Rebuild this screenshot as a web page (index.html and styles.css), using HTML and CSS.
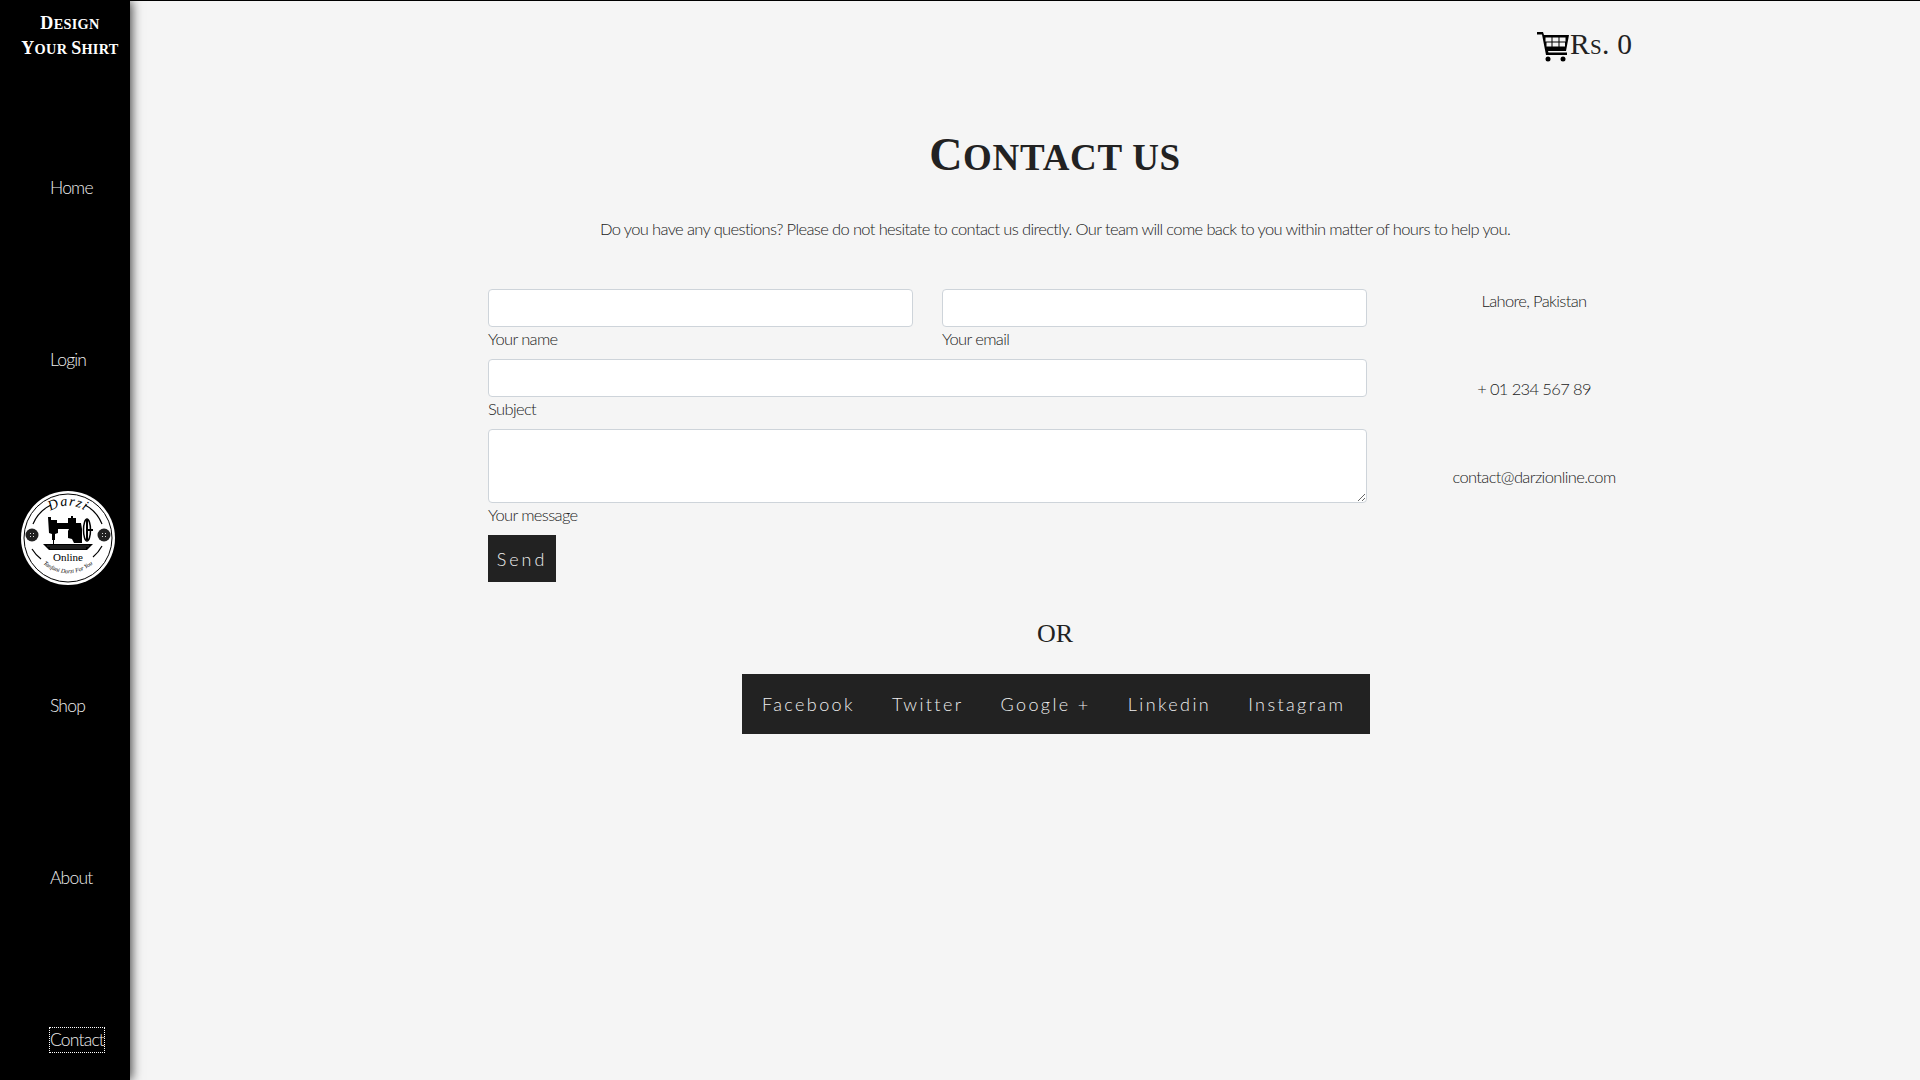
FILE: index.html
```html
<!DOCTYPE html>
<html>
<head>
	<title>Contact us</title>
	<link rel="stylesheet" href="styles.css">
</head>
<body>
<div class="page">
	<nav class="sidebar">
		<div class="brand"><span class="cap">D</span>esign<br><span class="cap">Y</span>our <span class="cap">S</span>hirt</div>
		<a class="nav-link home" href="#">Home</a>
		<a class="nav-link login" href="#">Login</a>
		<div class="logo">
			<svg width="94" height="94" viewBox="0 0 94 94">
				<defs>
					<path id="arc-top" d="M22 28A30 30 0 0 1 72 28"/>
					<path id="arc-low" d="M14 62A37 37 0 0 0 80 62"/>
				</defs>
				<circle cx="47" cy="47" r="47" fill="#fff"/>
				<circle cx="47" cy="47" r="44" fill="none" stroke="#000" stroke-width="1"/>
				<path d="M12 33A37 37 0 0 1 30 14M64 14A37 37 0 0 1 81 33M81 55A37 37 0 0 1 72 66M11 58A37 37 0 0 0 20 68" fill="none" stroke="#000" stroke-width="1.200"/>
				<circle cx="11" cy="44" r="6.500" fill="#222"/>
				<circle cx="83" cy="44" r="6.500" fill="#222"/>
				<path d="M9 42h1v1H9zM12 42h1v1h-1zM9 45h1v1H9zM12 45h1v1h-1zM81 42h1v1h-1zM84 42h1v1h-1zM81 45h1v1h-1zM84 45h1v1h-1z" fill="#ddd"/>
				<!-- sewing machine -->
				<path d="M27 26h3v3h6v3h11v-5h3v-2h2v2h3v5h5l1 6v14h-8l-2-4-4-1v-7l1-2H37v4l-3 1v6h-1v4h-1v-4h-1v-6l-3-1z" fill="#000"/>
				<ellipse cx="66" cy="39" rx="3.500" ry="11" fill="none" stroke="#000" stroke-width="1.500"/>
				<path d="M65 38h7v2h-7zM65 29h2v20h-2z" fill="#000"/>
				<path d="M22 53h50l-6 6H28z" fill="#000"/>
				<path d="M26 55h42M29 57h36" stroke="#777" stroke-width=".5"/>
				<text class="logo-top"><textPath href="#arc-top" startOffset="50%" text-anchor="middle">Darzi</textPath></text>
				<text class="logo-mid" x="47" y="69.500" text-anchor="middle">Online</text>
				<text class="logo-low"><textPath href="#arc-low" startOffset="50%" text-anchor="middle">Tanfani Darzi For You</textPath></text>
			</svg>
		</div>
		<a class="nav-link shop" href="#">Shop</a>
		<a class="nav-link about" href="#">About</a>
		<a class="nav-link contact" href="#">Contact</a>
	</nav>

	<main class="content">
		<div class="cart-row">
			<svg class="cart-icon" width="33" height="31" viewBox="0 0 33 31">
				<path d="M0 1h6l1 3h25l-3 16H11l.5 1.500H30V24H9L5 3.500H0z" fill="#000"/>
				<path d="M8.500 6.500h6v4h-6zM15.500 6.500h6v4h-6zM22.500 6.500h6v4h-6zM9.500 11.500h5v4h-5zM15.500 11.500h6v4h-6zM22.500 11.500h5.500v4h-5.500z" fill="#f5f5f5"/>
				<circle cx="11" cy="28" r="2.500" fill="#000"/>
				<circle cx="26" cy="28" r="2.500" fill="#000"/>
			</svg>
			<span class="cart-total">Rs. 0</span>
		</div>

		<h1 class="title">Contact us</h1>
		<p class="intro">Do you have any questions? Please do not hesitate to contact us directly. Our team will come back to you within matter of hours to help you.</p>

		<div class="contact-grid">
			<form class="contact-form">
				<div class="form-row">
					<div class="field">
						<input type="text" class="control">
						<label>Your name</label>
					</div>
					<div class="field">
						<input type="text" class="control">
						<label>Your email</label>
					</div>
				</div>
				<div class="field">
					<input type="text" class="control">
					<label>Subject</label>
				</div>
				<div class="field">
					<textarea class="control message"></textarea>
					<label>Your message</label>
				</div>
				<button type="button" class="send">Send</button>
			</form>
			<ul class="info">
				<li>Lahore, Pakistan</li>
				<li>+ 01 234 567 89</li>
				<li>contact@darzionline.com</li>
			</ul>
		</div>

		<div class="or">OR</div>
		<div class="social">
			<a href="#">Facebook</a>
			<a href="#">Twitter</a>
			<a href="#">Google +</a>
			<a href="#">Linkedin</a>
			<a href="#">Instagram</a>
		</div>
	</main>
</div>
</body>
</html>
```

FILE: styles.css
```css
* {
	box-sizing: border-box;
}

body {
	margin: 0;
	background-color: #f5f5f5;
	font-family: "Lato", "Open Sans", sans-serif;
	font-weight: 300;
	font-size: 16.500px;
	letter-spacing: -0.63px;
	color: #222;
}

.page {
	display: flex;
	height: 1080px;
	overflow: hidden;
	border-top: 1px solid #000;
}

.sidebar {
	display: flex;
	flex-direction: column;
	align-items: flex-start;
	width: 130px;
	flex-shrink: 0;
	padding-top: 10px;
	background-color: #000;
	box-shadow: 2px 0 10px rgba(0, 0, 0, 0.7);
	z-index: 1;
}

.brand {
	width: 100%;
	padding-left: 10px;
	text-align: center;
	color: #fff;
	font-family: "Liberation Serif", serif;
	text-transform: uppercase;
	font-weight: bold;
	font-size: 14.300px;
	letter-spacing: 0.3px;
	line-height: 24px;
}

.brand .cap {
	font-size: 18px;
}

.nav-link {
	margin-left: 50px;
	color: #eee;
	font-size: 17.500px;
	letter-spacing: -0.8px;
	line-height: 24px;
	text-decoration: none;
}

.home { margin-top: 115px; }
.login { margin-top: 148px; }
.shop { margin-top: 109px; }
.about { margin-top: 148px; }
.contact {
	margin-top: 138px;
	outline: 1px dotted #fff;
}

.logo {
	margin: 119px 0 0 21px;
	height: 94px;
}

.logo svg {
	display: block;
}

.logo-top {
	font-family: "Liberation Serif", serif;
	font-style: italic;
	font-size: 14px;
	letter-spacing: 1px;
}

.logo-mid {
	font-family: "Liberation Serif", serif;
	font-weight: normal;
	letter-spacing: 0;
	font-size: 11px;
}

.logo-low {
	font-family: "Liberation Serif", serif;
	font-style: italic;
	font-weight: normal;
	letter-spacing: 0;
	font-size: 6px;
}

.content {
	flex: 1;
	padding-left: 60px;
}

.cart-row {
	display: flex;
	align-items: center;
	height: 44px;
	margin: 21px 0 0 1347px;
}

.cart-icon {
	margin-top: 5px;
}

.cart-total {
	font-family: "Liberation Serif", serif;
	font-variant: small-caps;
	font-weight: normal;
	font-size: 29.500px;
	letter-spacing: 0.3px;
	color: #222;
}

.title {
	margin: 62px 0 0;
	text-align: center;
	font-family: "Liberation Serif", serif;
	text-transform: uppercase;
	font-weight: bold;
	font-size: 37px;
	letter-spacing: 0.7px;
	line-height: 54px;
	color: #222;
}

.title::first-letter {
	font-size: 46px;
}

.intro {
	margin: 32px 0 0;
	text-align: center;
	line-height: 24px;
}

.contact-grid {
	display: grid;
	grid-template-columns: 879px 292px;
	gap: 21px;
	margin: 48px 0 0 298px;
}

.form-row {
	display: grid;
	grid-template-columns: 425px 425px;
	gap: 29px;
}

.field label {
	display: block;
	height: 32px;
	line-height: 24px;
}

.control {
	display: block;
	width: 100%;
	height: 38px;
	background: #fff;
	border: 1px solid #ced4da;
	border-radius: 4px;
	padding: 6px 12px;
}

.message {
	height: 74px;
}

.send {
	display: block;
	width: 68px;
	height: 47px;
	padding: 0;
	border: 0;
	background-color: #222;
	color: #eee;
	font-family: inherit;
	font-weight: 300;
	font-size: 18px;
	letter-spacing: 3px;
}

.info {
	list-style: none;
	margin: 0;
	padding: 0;
	text-align: center;
}

.info li {
	height: 88px;
	line-height: 24px;
}

.or {
	margin-top: 36px;
	text-align: center;
	font-family: "Liberation Serif", serif;
	font-weight: normal;
	letter-spacing: 0;
	font-size: 26px;
	line-height: 32px;
}

.social {
	display: flex;
	align-items: center;
	gap: 37px;
	width: 628px;
	height: 60px;
	margin: 24px 0 0 552px;
	padding-left: 20px;
	background-color: #222;
}

.social a {
	color: #eee;
	text-decoration: none;
	white-space: nowrap;
	font-size: 18px;
	letter-spacing: 2.400px;
}
```
